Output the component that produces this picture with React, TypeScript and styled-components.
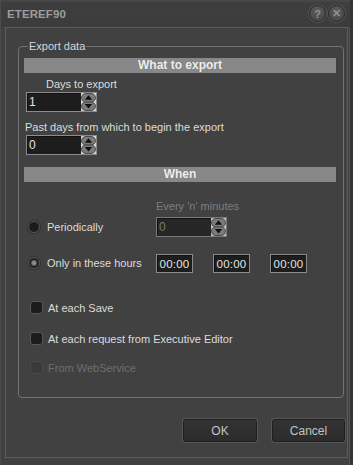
import React from "react";
import styled, { createGlobalStyle } from "styled-components";

const Global = createGlobalStyle`
  html, body { margin: 0; padding: 0; background: #3c3c3c; }
  body { font-family: "Liberation Sans", Arial, sans-serif; }
  * { box-sizing: border-box; }
`;

const Window = styled.div`
  width: 353px;
  height: 465px;
  background: #414141;
  border-left: 1px solid #4c4c4c;
  border-right: 3px solid #353535;
  box-shadow: inset -1px 0 0 #555;
  display: flex;
  flex-direction: column;
  padding: 0 2px 7px 4px;
`;

const TitleBar = styled.div`
  height: 27px;
  flex: none;
  display: flex;
  align-items: center;
  justify-content: space-between;
  margin: 0 -2px 0 -4px;
  padding-left: 6px;
  padding-right: 5px;
  background: linear-gradient(#4a4a4a 0, #3e3e3e 3px, #3c3c3c 100%);
`;

const Title = styled.div`
  font-weight: bold;
  font-size: 11.5px;
  color: #9c9c9c;
  letter-spacing: 0.1px;
  padding-top: 1px;
`;

const TitleButtons = styled.div`
  display: flex;
  gap: 2px;
  align-items: center;
`;

const RoundButton = styled.div`
  width: 17px;
  height: 17px;
  border-radius: 50%;
  background: radial-gradient(circle at 50% 35%, #5e5e5e, #4a4a4a 70%);
  border: 1px solid #2c2c2c;
  box-shadow: 0 0 0 1px #555;
  display: flex;
  align-items: center;
  justify-content: center;
  color: #8e8e8e;
  font-weight: bold;
  font-size: 11px;
`;

const Frame = styled.div`
  flex: 1;
  border: 1px solid #5c5c5c;
  display: flex;
  flex-direction: column;
  padding: 0 0 0 12px;
`;

const Group = styled.fieldset`
  margin: 11px 3px 0 0;
  border: 1px solid #727272;
  border-radius: 4px;
  padding: 0 7px 23px 5px;
  min-width: 0;
`;

const Legend = styled.legend`
  font-size: 11px;
  line-height: 14px;
  color: #d6d6d6;
  padding: 0 1px;
  margin-left: 4px;
`;

const SectionBar = styled.div<{ $top: number }>`
  margin-top: ${(p) => p.$top}px;
  height: 15px;
  background: #888888;
  color: #efefef;
  font-weight: bold;
  font-size: 12px;
  line-height: 15px;
  text-align: center;
  text-shadow: 0 0 1px #6a6a6a;
`;

const Label = styled.div<{ $top: number; $indent?: number; $disabled?: boolean }>`
  margin-top: ${(p) => p.$top}px;
  margin-left: ${(p) => p.$indent ?? 0}px;
  font-size: 11px;
  line-height: 13px;
  color: ${(p) => (p.$disabled ? "#7e7e7e" : "#dcdcdc")};
  white-space: nowrap;
`;

const InputBox = styled.div<{ $width: number; $height?: number; $top?: number; $disabled?: boolean }>`
  margin-top: ${(p) => p.$top ?? 0}px;
  width: ${(p) => p.$width}px;
  height: ${(p) => p.$height ?? 20}px;
  background: ${(p) => (p.$disabled ? "#262626" : "#1d1d1d")};
  border: 1px solid ${(p) => (p.$disabled ? "#7a7a7a" : "#8c8c8c")};
  box-shadow: inset 1px 1px 0 #111;
  display: flex;
  align-items: center;
  justify-content: space-between;
  padding-left: 2px;
  font-size: 12px;
  color: ${(p) => (p.$disabled ? "#7a7a7a" : "#e2e2e2")};
  flex: none;
`;

const SpinInput = styled(InputBox)`
  margin-left: 2px;
`;

const TimeBox = styled(InputBox)`
  justify-content: center;
  padding-left: 0;
  font-size: 11.5px;
  letter-spacing: 0.2px;
`;

const Spinner = ({ disabled }: { disabled?: boolean }) => (
  <svg width="15" height="18" viewBox="0 0 15 18" style={{ display: "block" }}>
    <rect x="0" y="0" width="15" height="18" fill={disabled ? "#bdbdbd" : "#d4d4d4"} />
    <rect x="0.5" y="0.5" width="14" height="8.5" rx="4.5" fill="#7a7a7a" stroke="#4a4a4a" />
    <rect x="0.5" y="9" width="14" height="8.5" rx="4.5" fill="#7a7a7a" stroke="#4a4a4a" />
    <polygon points="7.5,2.2 11.2,6.8 3.8,6.8" fill="#111" />
    <polygon points="7.5,15.6 11.2,11 3.8,11" fill="#111" />
  </svg>
);

const WhenGrid = styled.div`
  margin-top: 18px;
  display: grid;
  grid-template-columns: 132px auto;
  align-items: end;
  row-gap: 16px;
`;

const OptionCell = styled.div`
  display: flex;
  align-items: center;
  align-self: end;
  height: 20px;
  padding-left: 4px;
`;

const Radio = styled.div<{ $checked?: boolean }>`
  width: 12px;
  height: 12px;
  border-radius: 50%;
  background: ${(p) =>
    p.$checked
      ? "radial-gradient(circle, #9a9a9a 0, #7d7d7d 2px, #222 3.5px)"
      : "#1c1c1c"};
  border: 1px solid #575757;
  box-shadow: 0 0 0 1px #333;
  flex: none;
`;

const OptionText = styled.span<{ $gap: number; $disabled?: boolean }>`
  margin-left: ${(p) => p.$gap}px;
  font-size: 11px;
  color: ${(p) => (p.$disabled ? "#6e6e6e" : "#dcdcdc")};
  white-space: nowrap;
`;

const Column = styled.div`
  display: flex;
  flex-direction: column;
`;

const TimeRow = styled.div`
  display: flex;
  gap: 20px;
`;

const CheckRow = styled.div<{ $top: number }>`
  margin-top: ${(p) => p.$top}px;
  display: flex;
  align-items: center;
  height: 13px;
  padding-left: 6px;
`;

const CheckBox = styled.div<{ $disabled?: boolean }>`
  width: 13px;
  height: 13px;
  border-radius: 3px;
  background: ${(p) => (p.$disabled ? "#3a3a3a" : "#1c1c1c")};
  border: 1px solid ${(p) => (p.$disabled ? "#4a4a4a" : "#575757")};
  flex: none;
`;

const ButtonRow = styled.div`
  display: flex;
  justify-content: flex-end;
  gap: 15px;
  margin-top: 21px;
  padding-right: 2px;
`;

const Button = styled.div<{ $width: number }>`
  width: ${(p) => p.$width}px;
  height: 23px;
  border-radius: 3px;
  background: linear-gradient(#333 0, #2c2c2c 100%);
  border: 1px solid #1e1e1e;
  box-shadow: 0 0 0 1px #565656;
  display: flex;
  align-items: center;
  justify-content: center;
  color: #c4c4c4;
  font-size: 12px;
`;

export default function App() {
  return (
    <>
      <Global />
      <Window>
        <TitleBar>
          <Title>ETEREF90</Title>
          <TitleButtons>
            <RoundButton>?</RoundButton>
            <RoundButton>✕</RoundButton>
          </TitleButtons>
        </TitleBar>
        <Frame>
          <Group>
            <Legend>Export data</Legend>
            <SectionBar $top={5}>What to export</SectionBar>
            <Label $top={5} $indent={22}>Days to export</Label>
            <SpinInput $width={71} $top={1}>
              <span>1</span>
              <Spinner />
            </SpinInput>
            <Label $top={9} $indent={1}>Past days from which to begin the export</Label>
            <SpinInput $width={71} $top={1}>
              <span>0</span>
              <Spinner />
            </SpinInput>
            <SectionBar $top={12}>When</SectionBar>
            <WhenGrid>
              <OptionCell>
                <Radio />
                <OptionText $gap={7}>Periodically</OptionText>
              </OptionCell>
              <Column>
                <Label $top={0} $disabled>Every 'n' minutes</Label>
                <InputBox $width={71} $top={4} $disabled>
                  <span>0</span>
                  <Spinner disabled />
                </InputBox>
              </Column>
              <OptionCell>
                <Radio $checked />
                <OptionText $gap={7}>Only in these hours</OptionText>
              </OptionCell>
              <TimeRow>
                <TimeBox $width={37} $height={19}>00:00</TimeBox>
                <TimeBox $width={37} $height={19}>00:00</TimeBox>
                <TimeBox $width={37} $height={19}>00:00</TimeBox>
              </TimeRow>
            </WhenGrid>
            <CheckRow $top={28}>
              <CheckBox />
              <OptionText $gap={5}>At each Save</OptionText>
            </CheckRow>
            <CheckRow $top={18}>
              <CheckBox />
              <OptionText $gap={5}>At each request from Executive Editor</OptionText>
            </CheckRow>
            <CheckRow $top={16}>
              <CheckBox $disabled />
              <OptionText $gap={5} $disabled>From WebService</OptionText>
            </CheckRow>
          </Group>
          <ButtonRow>
            <Button $width={74}>OK</Button>
            <Button $width={73}>Cancel</Button>
          </ButtonRow>
        </Frame>
      </Window>
    </>
  );
}
